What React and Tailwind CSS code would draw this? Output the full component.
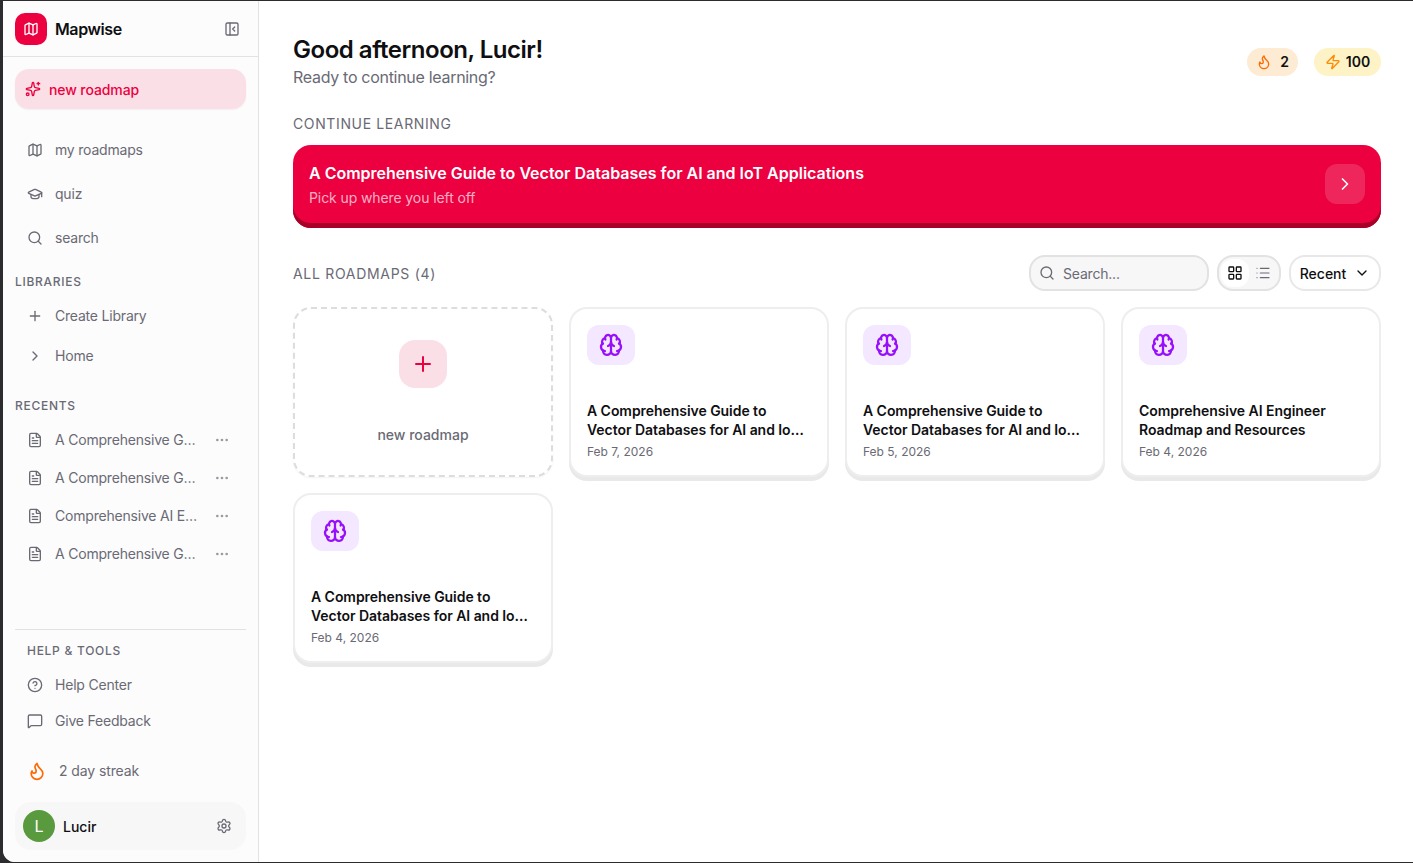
import React from 'react';
import {
  Map, PanelLeftClose, Sparkles, GraduationCap, Search, Plus, ChevronRight, ChevronDown,
  FileText, MoreHorizontal, CircleHelp, MessageSquare, Flame, Settings, Zap, LayoutGrid, List, Brain,
} from 'lucide-react';

const recents = ['A Comprehensive G…', 'A Comprehensive G…', 'Comprehensive AI E…', 'A Comprehensive G…'];

const roadmaps = [
  { title: 'A Comprehensive Guide to Vector Databases for AI and Io…', date: 'Feb 7, 2026' },
  { title: 'A Comprehensive Guide to Vector Databases for AI and Io…', date: 'Feb 5, 2026' },
  { title: 'Comprehensive AI Engineer Roadmap and Resources', date: 'Feb 4, 2026' },
  { title: 'A Comprehensive Guide to Vector Databases for AI and Io…', date: 'Feb 4, 2026' },
];

const NavRow = ({ icon: Icon, label, className }) => (
  <div className={`flex items-center gap-3 pl-3 text-sm tracking-[-0.2px] text-[#6a6a75] ${className}`}>
    <Icon size={16} className="shrink-0" />
    <span>{label}</span>
  </div>
);

const SectionLabel = ({ children, className }) => (
  <div className={`text-xs font-medium uppercase tracking-[0.06em] text-[#6a6a75] ${className}`}>{children}</div>
);

const RoadmapCard = ({ title, date }) => (
  <div className="flex h-[170px] flex-col rounded-[18px] border-2 border-[#eeeeee] bg-white px-4 pb-[13px] pt-4 shadow-[0_4px_0_#e9e9e9]">
    <div className="flex h-10 w-12 items-center justify-center rounded-xl bg-[#f3e8ff]">
      <Brain size={24} strokeWidth={2.25} className="text-[#9810fa]" />
    </div>
    <div className="mt-auto">
      <div className="text-sm leading-[19px] font-semibold tracking-[-0.05px] text-[#0f0f12]">{title}</div>
      <div className="mt-[3px] text-xs leading-[20px] text-[#6a6a75]">{date}</div>
    </div>
  </div>
);

const Sidebar = () => (
  <aside className="flex h-full w-[256px] shrink-0 flex-col border-r border-[#e2e2e2] bg-[#fcfcfc]">
    {/* Logo */}
    <div className="flex h-[56px] shrink-0 items-center justify-between border-b border-[#e2e2e2] px-3">
      <div className="flex items-center gap-2">
        <div className="flex size-8 items-center justify-center rounded-[10px] bg-[#ec003f]">
          <Map size={16} className="text-white" />
        </div>
        <span className="text-base font-semibold tracking-[-0.4px] text-[#0f0f12]">Mapwise</span>
      </div>
      <PanelLeftClose size={16} className="mr-[6px] text-[#6a6a75]" />
    </div>

    <div className="flex flex-1 flex-col px-3">
      <div className="mt-[12px] flex h-10 items-center gap-2 rounded-[14px] bg-[#fbdfe6] pl-[10px] text-sm leading-[21px] font-medium tracking-[-0.1px] text-[#ec003f] shadow-[0_1px_2px_rgba(0,0,0,0.05)]">
        <Sparkles size={16} />
        <span className="pt-px">new roadmap</span>
      </div>

      <div className="mt-[19px] flex flex-col">
        <NavRow icon={Map} label="my roadmaps" className="h-11" />
        <NavRow icon={GraduationCap} label="quiz" className="h-11" />
        <NavRow icon={Search} label="search" className="h-11" />
      </div>

      <SectionLabel className="mt-[14px] leading-4">Libraries</SectionLabel>
      <div className="mt-[6px] flex flex-col">
        <NavRow icon={Plus} label="Create Library" className="h-10" />
        <NavRow icon={ChevronRight} label="Home" className="h-10" />
      </div>

      <SectionLabel className="mt-[22px] leading-4">Recents</SectionLabel>
      <div className="mt-[7px] flex flex-col">
        {recents.map((name, i) => (
          <div key={i} className="flex h-[38px] items-center gap-3 pl-3 pr-4 text-sm tracking-[-0.2px] text-[#6a6a75]">
            <FileText size={16} className="shrink-0" />
            <span className="flex-1 whitespace-nowrap">{name}</span>
            <MoreHorizontal size={16} className="shrink-0 text-[#9a9aa3]" />
          </div>
        ))}
      </div>

      {/* Bottom */}
      <div className="mt-auto border-t border-[#e2e2e2] pt-[13px]">
        <SectionLabel className="pl-[12px] leading-4">Help &amp; Tools</SectionLabel>
        <div className="mt-[8px] flex flex-col">
          <NavRow icon={CircleHelp} label="Help Center" className="h-9" />
          <NavRow icon={MessageSquare} label="Give Feedback" className="h-9" />
        </div>
        <div className="mt-[14px] flex h-9 items-center gap-3 pl-3 text-sm tracking-[-0.1px] text-[#6a6a75]">
          <Flame size={20} className="text-[#ff6900]" />
          <span>2 day streak</span>
        </div>
        <div className="mb-[12px] mt-[13px] flex h-12 items-center rounded-2xl bg-[#f7f7f7] pl-2 pr-[14px]">
          <div className="flex size-8 items-center justify-center rounded-full bg-[#5a9a3e] text-base text-white">L</div>
          <span className="ml-2 flex-1 pt-[2px] text-sm font-medium text-[#0f0f12]">Lucir</span>
          <Settings size={16} className="text-[#6a6a75]" />
        </div>
      </div>
    </div>
  </aside>
);

const Main = () => (
  <main className="min-w-0 flex-1 bg-white pl-[34px] pr-[32px] pt-[35px]">
    <div className="flex items-start justify-between">
      <div>
        <h1 className="text-2xl leading-[28px] font-semibold tracking-[-0.02em] text-[#0f0f12]">Good afternoon, Lucir!</h1>
        <p className="text-base leading-[26px] tracking-[-0.3px] text-[#6a6a75]">Ready to continue learning?</p>
      </div>
      <div className="mt-[12px] flex items-center gap-4">
        <div className="flex h-7 w-[51px] items-center justify-center gap-2 rounded-full bg-[#fdebd3] text-sm font-semibold text-[#0f0f12]">
          <Flame size={16} className="text-[#ff6900]" />
          <span>2</span>
        </div>
        <div className="flex h-7 w-[67px] items-center justify-center gap-[5px] rounded-full bg-[#fef3c6] text-sm font-semibold text-[#0f0f12]">
          <Zap size={16} className="text-[#ff8904]" />
          <span>100</span>
        </div>
      </div>
    </div>

    <div className="mt-[24px] text-sm leading-5 uppercase tracking-[0.045em] text-[#6a6a75]">Continue learning</div>

    <div className="mt-[11px] flex h-[83px] items-center justify-between rounded-[18px] bg-[#ec003f] pb-[5px] pl-4 pr-4 shadow-[inset_0_-5px_0_#a80029]">
      <div>
        <div className="text-base leading-6 font-semibold text-white">A Comprehensive Guide to Vector Databases for AI and IoT Applications</div>
        <div className="mt-[3px] text-sm leading-5 tracking-[-0.1px] text-white/70">Pick up where you left off</div>
      </div>
      <div className="flex size-10 items-center justify-center rounded-xl bg-white/15">
        <ChevronRight size={20} className="text-white" />
      </div>
    </div>

    <div className="mt-[27px] flex h-9 items-center justify-between">
      <div className="pt-px text-sm uppercase tracking-[0.05em] text-[#6a6a75]">All roadmaps (4)</div>
      <div className="flex items-center gap-2">
        <div className="flex h-9 w-[180px] items-center gap-2 rounded-2xl border-2 border-[#e2e2e2] bg-[#f7f7f7] pl-2 text-sm tracking-[-0.2px] text-[#6a6a75]">
          <Search size={16} />
          <span className="pt-px">Search...</span>
        </div>
        <div className="flex h-9 w-16 items-center rounded-2xl border-2 border-[#e2e2e2] bg-[#f7f7f7] p-[2px]">
          <div className="flex h-7 w-7 items-center justify-center rounded-xl bg-white text-[#0f0f12]">
            <LayoutGrid size={16} />
          </div>
          <div className="flex h-7 w-7 items-center justify-center text-[#6a6a75]">
            <List size={16} strokeWidth={1.75} />
          </div>
        </div>
        <div className="flex h-9 w-[92px] items-center justify-center gap-2 rounded-2xl border-2 border-[#e8e8e8] bg-white text-sm font-medium text-[#0f0f12]">
          <span className="pt-px">Recent</span>
          <ChevronDown size={16} />
        </div>
      </div>
    </div>

    <div className="mt-[16px] grid grid-cols-4 gap-4">
      <div className="flex h-[170px] flex-col items-center rounded-[18px] border-2 border-dashed border-[#dddddd] bg-white shadow-[0_1px_2px_rgba(0,0,0,0.05)]">
        <div className="mt-[31px] flex size-12 items-center justify-center rounded-2xl bg-[#fbdfe6]">
          <Plus size={24} className="text-[#ec003f]" />
        </div>
        <div className="mt-[37px] text-sm font-medium text-[#6a6a75]">new roadmap</div>
      </div>
      {roadmaps.map((r, i) => (
        <RoadmapCard key={i} title={r.title} date={r.date} />
      ))}
    </div>
  </main>
);

const App = () => (
  <div className="h-[863px] w-[1413px] overflow-hidden bg-[#2c2c2e] pb-px pl-[3px] pt-px font-['Inter',sans-serif]">
    <div className="flex h-full overflow-hidden rounded-bl-[12px] bg-white">
      <Sidebar />
      <Main />
    </div>
  </div>
);

export default App;
